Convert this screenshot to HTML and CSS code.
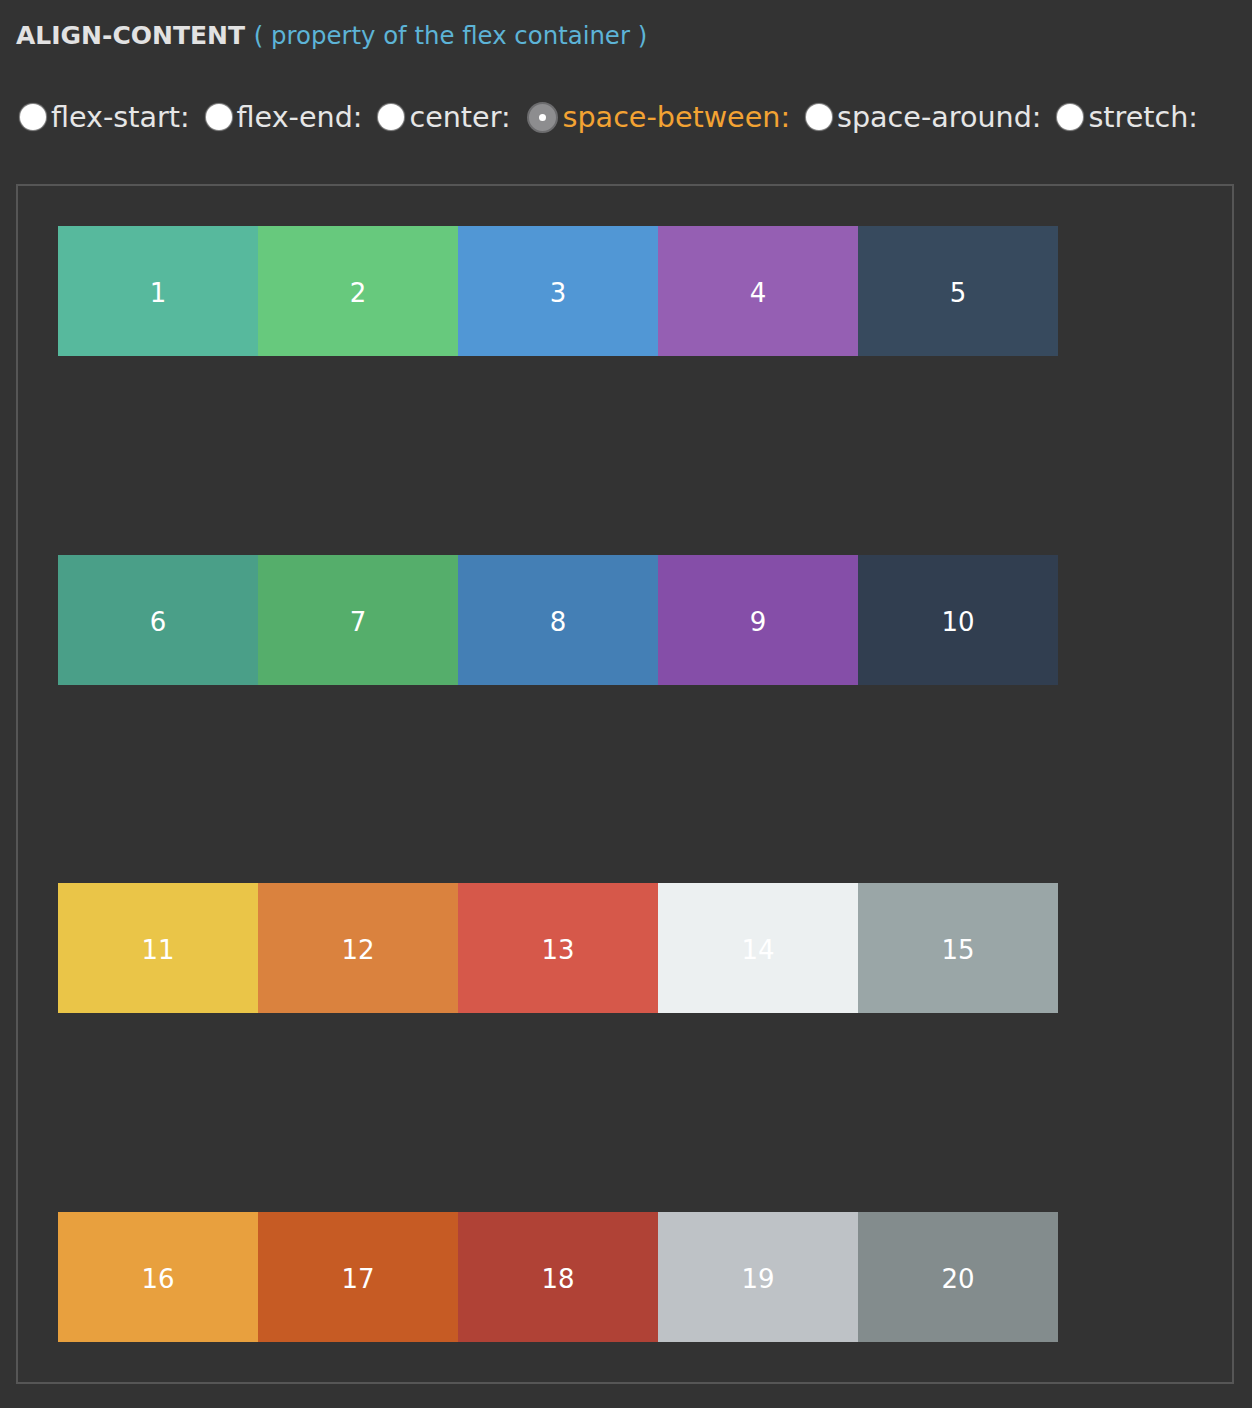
FILE: index.html
```html
<!DOCTYPE html>
<html lang="en">
<head>
<meta charset="utf-8">
<title>align-content</title>
<link rel="stylesheet" href="styles.css">
</head>
<body>
<h1 class="title">ALIGN-CONTENT <span class="title-note">( property of the flex container )</span></h1>
<div class="options">
  <label class="option"><span class="radio"></span><span class="option-text">flex-start:</span></label>
  <label class="option"><span class="radio"></span><span class="option-text">flex-end:</span></label>
  <label class="option"><span class="radio"></span><span class="option-text">center:</span></label>
  <label class="option option-active"><span class="radio radio-checked"></span><span class="option-text">space-between:</span></label>
  <label class="option"><span class="radio"></span><span class="option-text">space-around:</span></label>
  <label class="option"><span class="radio"></span><span class="option-text">stretch:</span></label>
</div>
<div class="container">
  <div class="item c1">1</div>
  <div class="item c2">2</div>
  <div class="item c3">3</div>
  <div class="item c4">4</div>
  <div class="item c5">5</div>
  <div class="item c6">6</div>
  <div class="item c7">7</div>
  <div class="item c8">8</div>
  <div class="item c9">9</div>
  <div class="item c10">10</div>
  <div class="item c11">11</div>
  <div class="item c12">12</div>
  <div class="item c13">13</div>
  <div class="item c14">14</div>
  <div class="item c15">15</div>
  <div class="item c16">16</div>
  <div class="item c17">17</div>
  <div class="item c18">18</div>
  <div class="item c19">19</div>
  <div class="item c20">20</div>
</div>
</body>
</html>
```
FILE: styles.css
```css
html, body {
  background: #333333;
}
body {
  margin: 0;
  padding: 16px 16px 0 16px;
  font-family: "DejaVu Sans", Verdana, sans-serif;
  color: #e4e4e4;
}
.title {
  margin: 0;
  height: 40px;
  line-height: 40px;
  font-size: 25px;
  font-weight: bold;
  color: #e2e2e2;
  white-space: nowrap;
}
.title-note {
  font-weight: normal;
  font-size: 24.4px;
  color: #5db4d7;
}
.options {
  margin-top: 41px;
  height: 40px;
  display: flex;
  align-items: center;
  gap: 16px;
  font-family: "DejaVu Sans", Verdana, sans-serif;
  font-size: 28.6px;
  line-height: 40px;
  color: #e6e6e6;
  padding-left: 4px;
}
.option {
  display: flex;
  align-items: center;
  gap: 5px;
  white-space: nowrap;
}
.option-active {
  color: #f3a333;
}
.radio {
  width: 26px;
  height: 26px;
  border-radius: 50%;
  background: #ffffff;
  box-shadow: 0 0 1px 1px rgba(255,255,255,0.45);
  flex: none;
}
.radio-checked {
  width: 27px;
  height: 27px;
  background: #8d8d8f;
  border: 2px solid #6c6c6e;
  box-shadow: none;
  display: flex;
  align-items: center;
  justify-content: center;
}
.radio-checked::after {
  content: "";
  width: 7px;
  height: 7px;
  border-radius: 50%;
  background: #ffffff;
}
.container {
  margin-top: 47px;
  width: 1218px;
  height: 1200px;
  box-sizing: border-box;
  border: 2px solid #565656;
  padding: 40px;
  display: flex;
  flex-wrap: wrap;
  align-content: space-between;
}
.item {
  flex: none;
  width: 200px;
  height: 130px;
  box-sizing: border-box;
  padding-top: 4px;
  display: flex;
  align-items: center;
  justify-content: center;
  color: #ffffff;
  font-size: 26px;
}
.c1 { background: #57b99d; }
.c2 { background: #67c97d; }
.c3 { background: #5197d5; }
.c4 { background: #955fb3; }
.c5 { background: #374a5e; }
.c6 { background: #4a9f88; }
.c7 { background: #55ae6b; }
.c8 { background: #447fb5; }
.c9 { background: #854ea8; }
.c10 { background: #313e50; }
.c11 { background: #eac548; }
.c12 { background: #da823e; }
.c13 { background: #d6584a; }
.c14 { background: #ecf0f1; }
.c15 { background: #9aa6a7; }
.c16 { background: #e8a03e; }
.c17 { background: #c65b24; }
.c18 { background: #b04236; }
.c19 { background: #bec2c6; }
.c20 { background: #838c8d; }
```
